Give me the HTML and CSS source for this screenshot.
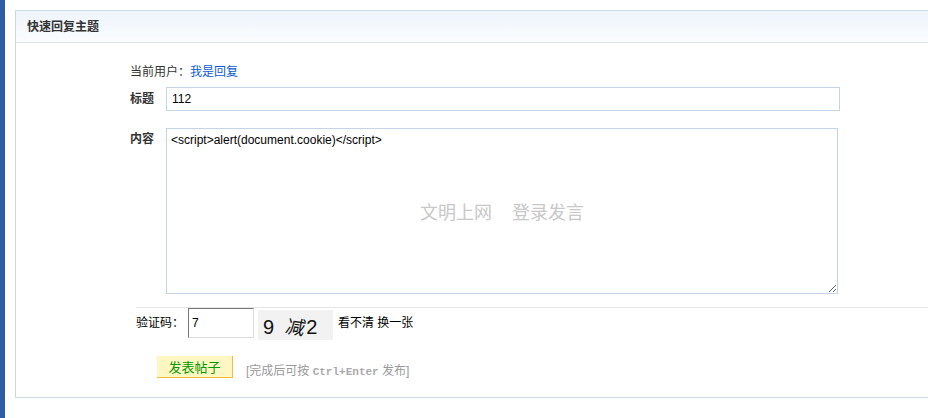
FILE: index.html
```html
<!DOCTYPE html>
<html lang="zh-CN">
<head>
    <meta charset="UTF-8">
    <title>快速回复主题</title>
    <link rel="stylesheet" href="styles.css">
</head>
<body>
<div class="strip"></div>
<div class="main">
    <div class="panel">
        <div class="panel-head">快速回复主题</div>
        <div class="panel-body">
            <div class="user-line">当前用户：<a href="#">我是回复</a></div>

            <div class="row">
                <label class="row-label" for="subject">标题</label>
                <input type="text" id="subject" class="subject" value="112">
            </div>

            <div class="row row-content">
                <label class="row-label" for="content">内容</label>
                <div class="editor">
                    <textarea id="content">&lt;script&gt;alert(document.cookie)&lt;/script&gt;</textarea>
                    <span class="editor-tip">文明上网&nbsp;&nbsp;&nbsp;&nbsp;登录发言</span>
                </div>
            </div>

            <div class="captcha-row">
                <label for="code">验证码：</label>
                <input type="text" id="code" class="code" value="7">
                <span class="captcha-img"><b>9</b><i>减</i><b>2</b></span>
                <a href="#" class="captcha-change">看不清 换一张</a>
            </div>

            <div class="submit-row">
                <button class="submit">发表帖子</button>
                <span class="hint">[完成后可按 <code>Ctrl+Enter</code> 发布]</span>
            </div>
        </div>
    </div>
</div>
</body>
</html>
```
FILE: styles.css
```css
* {
    margin: 0;
    padding: 0;
    box-sizing: border-box;
}

body {
    font-family: "Liberation Sans", Arial, "Noto Sans CJK SC", sans-serif;
    font-size: 12px;
    color: #333;
    background: #fff;
    display: flex;
    height: 418px;
    overflow: hidden;
}

.strip {
    width: 5px;
    background-color: #2b5ea6;
    flex-shrink: 0;
}

.main {
    flex: 1;
    padding: 10px 0 0 10px;
}

.panel {
    border: 1px solid #cdd8e6;
    border-right: none;
    height: 388px;
}

.panel-head {
    height: 32px;
    line-height: 33px;
    padding-left: 11px;
    font-weight: bold;
    font-size: 12px;
    color: #333;
    background: linear-gradient(#eef4fc, #fbfdff);
    border-bottom: 1px solid #dde4ee;
}

.panel-body {
    padding-left: 114px;
}

.user-line {
    margin-top: 21px;
    line-height: 16px;
    color: #333;
}

.user-line a {
    color: #0a5cd6;
    text-decoration: none;
}

.row {
    display: flex;
    margin-top: 7px;
}

.row-label {
    width: 36px;
    font-weight: bold;
    line-height: 24px;
    font-size: 12px;
    color: #333;
}

.subject {
    width: 674px;
    height: 24px;
    border: 1px solid #c5d5e8;
    padding: 0 5px;
    font-family: inherit;
    font-size: 12px;
    color: #000;
    outline: none;
}

.row-content {
    margin-top: 17px;
}

.row-content .row-label {
    line-height: 22px;
}

.editor {
    position: relative;
    width: 672px;
    height: 166px;
}

.editor textarea {
    width: 100%;
    height: 100%;
    border: 1px solid #c5d5e8;
    padding: 4px 4px;
    font-family: inherit;
    font-size: 12px;
    color: #000;
    outline: none;
}

.editor-tip {
    position: absolute;
    left: 0;
    right: 0;
    top: 70px;
    text-align: center;
    font-size: 18px;
    color: #c8c8c8;
    pointer-events: none;
}

.captcha-row {
    display: flex;
    align-items: flex-start;
    margin-top: 13px;
    margin-left: 6px;
    border-top: 1px solid #e5e5e5;
    font-size: 12px;
    color: #000;
}

.captcha-row label {
    line-height: 30px;
    width: 52px;
}

.code {
    width: 66px;
    height: 30px;
    border: 1px solid #ddd;
    border-left-color: #777;
    border-top-color: #777;
    padding: 0 3px;
    font-family: inherit;
    font-size: 12px;
    color: #000;
    outline: none;
}

.captcha-img {
    display: inline-block;
    margin: 2px 0 0 4px;
    width: 75px;
    height: 30px;
    background: #f2f2f2;
    font-size: 20px;
    line-height: 34px;
    padding-left: 5px;
    color: #111;
    white-space: nowrap;
}

.captcha-img b {
    font-weight: normal;
}

.captcha-img i {
    font-style: normal;
    font-size: 19px;
    margin: 0 1px 0 12px;
    display: inline-block;
    transform: rotate(8deg) skewX(-8deg);
}

.captcha-change {
    color: #000;
    text-decoration: none;
    line-height: 30px;
    margin-left: 5px;
}

.submit-row {
    display: flex;
    align-items: center;
    margin-top: 15px;
    margin-left: 27px;
}

.submit {
    width: 76px;
    height: 22px;
    background: #fff7c2;
    border: none;
    border-right: 1px solid #f5b93c;
    border-bottom: 1px solid #f5b93c;
    color: #090;
    font-family: inherit;
    font-size: 13px;
    cursor: pointer;
}

.hint {
    margin-left: 13px;
    margin-top: 6px;
    color: #999;
    font-size: 12px;
}

.hint code {
    font-family: "Liberation Mono", "Courier New", monospace;
    font-weight: bold;
    font-size: 11px;
    color: #aaa;
}
```
